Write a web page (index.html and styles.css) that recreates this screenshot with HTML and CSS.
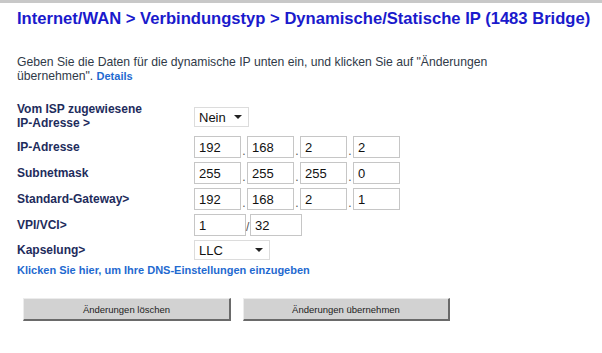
FILE: index.html
```html
<!DOCTYPE html>
<html>
<head>
    <link rel="stylesheet" href="styles.css">
</head>
<body>
    <div class="top-bar"></div>
    <div class="page">
        <h1>Internet/WAN &gt; Verbindungstyp &gt; Dynamische/Statische IP (1483 Bridge)</h1>

        <p class="intro">Geben Sie die Daten für die dynamische IP unten ein, und klicken Sie auf "Änderungen übernehmen". <a href="#" class="blue-link">Details</a></p>

        <form class="settings">
            <!-- ISP assigned -->
            <label class="row-label">Vom ISP zugewiesene<br>IP-Adresse &gt;</label>
            <div class="field">
                <span class="dropdown nein">
                    <select><option>Nein</option><option>Ja</option></select>
                </span>
            </div>

            <!-- IP address -->
            <label class="row-label">IP-Adresse</label>
            <div class="field">
                <input type="text" class="octet" value="192"><span class="sep">.</span>
                <input type="text" class="octet" value="168"><span class="sep">.</span>
                <input type="text" class="octet" value="2"><span class="sep">.</span>
                <input type="text" class="octet" value="2">
            </div>

            <!-- Subnet -->
            <label class="row-label">Subnetmask</label>
            <div class="field">
                <input type="text" class="octet" value="255"><span class="sep">.</span>
                <input type="text" class="octet" value="255"><span class="sep">.</span>
                <input type="text" class="octet" value="255"><span class="sep">.</span>
                <input type="text" class="octet" value="0">
            </div>

            <!-- Gateway -->
            <label class="row-label">Standard-Gateway&gt;</label>
            <div class="field">
                <input type="text" class="octet" value="192"><span class="sep">.</span>
                <input type="text" class="octet" value="168"><span class="sep">.</span>
                <input type="text" class="octet" value="2"><span class="sep">.</span>
                <input type="text" class="octet" value="1">
            </div>

            <!-- VPI/VCI -->
            <label class="row-label">VPI/VCI&gt;</label>
            <div class="field">
                <input type="text" class="vc" value="1"><span class="slash">/</span><input type="text" class="vc" value="32">
            </div>

            <!-- Encapsulation -->
            <label class="row-label">Kapselung&gt;</label>
            <div class="field">
                <span class="dropdown llc">
                    <select><option>LLC</option><option>VC-MUX</option></select>
                </span>
            </div>
        </form>

        <a href="#" class="blue-link dns-link">Klicken Sie hier, um Ihre DNS-Einstellungen einzugeben</a>
    </div>

    <div class="buttons">
        <button type="button" class="btn clear">Änderungen löschen</button>
        <button type="button" class="btn apply">Änderungen übernehmen</button>
    </div>
</body>
</html>
```

FILE: styles.css
```css
body {
    margin: 0;
    font-family: "Liberation Sans", Arial, sans-serif;
    background: #fff;
    color: #333;
}

.top-bar {
    height: 3px;
    background: #c8c8c8;
}

.page {
    padding-left: 17px;
}

h1 {
    margin: 6px 0 0;
    font-size: 16.6px;
    font-weight: bold;
    color: #1a1acc;
    line-height: 19px;
}

.intro {
    margin: 27px 0 0;
    max-width: 520px;
    font-size: 12.2px;
    line-height: 14px;
    color: #303a48;
}

.blue-link {
    color: #1f6ad0;
    font-weight: bold;
    font-size: 11px;
    line-height: 12px;
    text-decoration: none;
}

.settings {
    display: grid;
    grid-template-columns: 177px auto;
    row-gap: 4px;
    align-items: center;
    margin-top: 19px;
}

.row-label {
    font-size: 12px;
    font-weight: bold;
    line-height: 14px;
    color: #1e2c5c;
}

.row-label:first-child {
    padding-bottom: 2px;
}

.field {
    display: flex;
    align-items: flex-end;
}

input[type="text"] {
    box-sizing: border-box;
    height: 22px;
    margin: 0;
    padding: 0 4px;
    border: 1px solid #c6c6c6;
    font-family: "Liberation Sans", Arial, sans-serif;
    font-size: 13px;
    color: #111;
}

.octet {
    width: 47px;
}

.vc {
    width: 52px;
}

.sep {
    width: 6px;
    font-size: 12px;
    line-height: 14px;
    text-align: center;
    color: #555;
}

.slash {
    width: 4px;
    font-size: 12px;
    line-height: 18px;
    color: #555;
}

.dropdown {
    position: relative;
    display: inline-block;
}

.dropdown select {
    appearance: none;
    -webkit-appearance: none;
    box-sizing: border-box;
    height: 20px;
    margin: 0;
    padding: 0 0 0 4px;
    border: 1px solid #dcdcdc;
    background: #fff;
    font-family: "Liberation Sans", Arial, sans-serif;
    font-size: 13px;
    color: #111;
}

.dropdown::after {
    content: "";
    position: absolute;
    right: 7px;
    top: 8px;
    border-left: 4px solid transparent;
    border-right: 4px solid transparent;
    border-top: 4px solid #222;
    pointer-events: none;
}

.nein select {
    width: 55px;
}

.llc select {
    width: 76px;
}

.dns-link {
    display: block;
    margin-top: 4px;
    line-height: 13px;
}

.buttons {
    display: flex;
    gap: 12px;
    padding-left: 23px;
    margin-top: 21px;
}

.btn {
    box-sizing: border-box;
    height: 23px;
    padding: 0;
    background: #d2d2d2;
    border-style: solid;
    border-width: 1px 2px 2px 1px;
    border-color: #ececec #6a6a6a #6a6a6a #ececec;
    font-family: "Liberation Sans", Arial, sans-serif;
    font-size: 9.5px;
    color: #222;
    cursor: pointer;
}

.clear {
    width: 208px;
}

.apply {
    width: 207px;
}
```
